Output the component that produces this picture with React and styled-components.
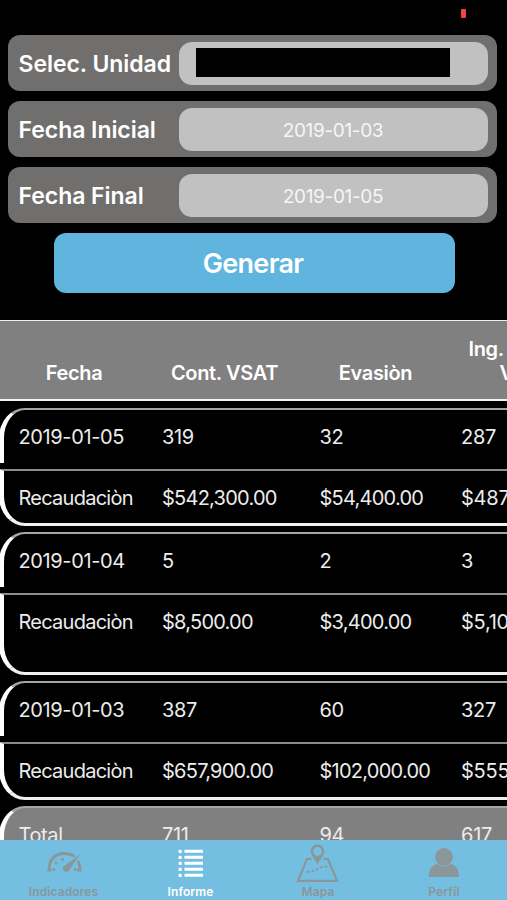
import styled, { createGlobalStyle } from 'styled-components';

const GlobalStyle = createGlobalStyle`
  * {
    box-sizing: border-box;
  }
  body {
    margin: 0;
    background-color: #000000;
    color: #ffffff;
    font-family: Inter, 'Liberation Sans', sans-serif;
    overflow: hidden;
  }
`;

const Screen = styled.div`
  display: flex;
  flex-direction: column;
  width: 507px;
  height: 900px;
  overflow: hidden;
  background-color: #000000;
`;

const StatusBar = styled.div`
  display: flex;
  justify-content: flex-end;
  flex: none;
  height: 35px;
  padding: 9px 41px 0 0;
`;

const Battery = styled.div`
  width: 5px;
  height: 9px;
  border-radius: 1px;
  background-color: #f4453a;
`;

const Form = styled.div`
  display: flex;
  flex-direction: column;
  flex: none;
  gap: 10px;
  height: 285px;
  padding: 0 10px 0 8px;
`;

const Field = styled.div`
  display: flex;
  align-items: center;
  justify-content: space-between;
  height: 56px;
  padding: 0 9px 0 10.5px;
  border-radius: 12px;
  background-color: #706f6e;
`;

const Label = styled.span`
  padding-top: 2px;
  font-size: 23px;
  font-weight: 600;
  letter-spacing: -0.05px;
  white-space: nowrap;
`;

const Input = styled.div`
  display: flex;
  align-items: center;
  justify-content: center;
  flex: none;
  width: 309px;
  height: 43px;
  padding: 2px 1px 0 0;
  border-radius: 13px;
  background-color: #c1c1c1;
  font-size: 19px;
  letter-spacing: -0.35px;
  color: #f6f6f6;
`;

const Redacted = styled.div`
  width: 254px;
  height: 29px;
  margin: 0 20px 3px 0;
  background-color: #000000;
`;

const Button = styled.button`
  align-self: center;
  width: 401px;
  height: 60px;
  margin-left: 3px;
  padding: 1px 2px 0 0;
  border: none;
  border-radius: 12px;
  background-color: #5fb5dd;
  color: #ffffff;
  font-family: inherit;
  font-size: 27px;
  font-weight: 600;
  letter-spacing: -0.7px;
`;

const Table = styled.div`
  flex: 1;
  min-height: 0;
  overflow: hidden;
`;

const Header = styled.div`
  display: grid;
  grid-template-columns: 148px 153px 149px 200px;
  align-items: end;
  height: 81px;
  margin-bottom: 7px;
  padding-bottom: 14px;
  border-top: 1px solid #ececec;
  border-bottom: 2px solid #f2f2f2;
  background-color: #808080;
`;

const HeaderCell = styled.div`
  padding-left: ${(props) => (props.$wrap ? '18.5px' : '0')};
  font-size: 20px;
  font-weight: 600;
  line-height: 24px;
  letter-spacing: -0.35px;
  text-align: ${(props) => (props.$wrap ? 'left' : 'center')};
  white-space: nowrap;
`;

const SecondLine = styled.div`
  padding-left: 31px;
`;

const Group = styled.div`
  display: flex;
  flex-direction: column;
  gap: 6px;
  width: 660px;
  margin: 0 0 6px -1px;
`;

const Row = styled.div`
  display: grid;
  grid-template-columns: 143.5px 157.5px 141.5px 200px;
  align-items: start;
  height: ${(props) => props.$height}px;
  padding: 15px 0 0 14.5px;
  border-left: 5px solid #ffffff;
  border-top: 2px solid ${(props) => (props.$last ? '#8c8c8c' : '#a6a6a6')};
  border-bottom: ${(props) => (props.$last ? '3px solid #f0f0f0' : 'none')};
  border-radius: ${(props) => (props.$last ? '0 0 0 26px / 0 0 0 30px' : '26px 0 0 0 / 30px 0 0 0')};
  background-color: ${(props) => (props.$total ? '#808080' : '#000000')};
`;

const Cell = styled.div`
  font-size: 20px;
  line-height: 24px;
  letter-spacing: ${(props) => (props.$money ? -0.75 : -0.37)}px;
  color: #ececec;
  white-space: nowrap;

  &:last-child {
    letter-spacing: -0.25px;
  }
`;

const TabBar = styled.div`
  display: grid;
  grid-template-columns: 127px 127px 128px 124px;
  flex: none;
  height: 60px;
  background-color: #74bfe1;
`;

const Tab = styled.div`
  display: flex;
  flex-direction: column;
  align-items: center;
  color: ${(props) => (props.$active ? '#ffffff' : '#8b9699')};
`;

const TabIcon = styled.svg`
  display: block;
  flex: none;
  width: 46px;
  height: 44px;
`;

const TabLabel = styled.span`
  font-size: 12px;
  font-weight: 600;
  line-height: 15px;
  letter-spacing: 0.1px;
`;

const groups = [
  {
    date: ['2019-01-05', '319', '32', '287'],
    money: ['Recaudaciòn', '$542,300.00', '$54,400.00', '$487,900.00'],
    height: 57,
  },
  {
    date: ['2019-01-04', '5', '2', '3'],
    money: ['Recaudaciòn', '$8,500.00', '$3,400.00', '$5,100.00'],
    height: 82,
  },
  {
    date: ['2019-01-03', '387', '60', '327'],
    money: ['Recaudaciòn', '$657,900.00', '$102,000.00', '$555,900.00'],
    height: 58,
  },
];

const total = ['Total', '711', '94', '617'];

const GaugeIcon = () => (
  <TabIcon viewBox="0 4.5 46 44">
    <path
      d="M8 35.500C7.500 24 14 18 23.500 18c4 0 7.500 1 10 3.200M37 25.500c1.700 3 2 6 2 10"
      fill="none"
      stroke="currentColor"
      strokeWidth="2.800"
    />
    <path d="M39.500 18.500L29 33.500c-1.200 2.500-3.500 3.500-6 2-2.300-2-1.500-4.500 1-5.500z" fill="currentColor" />
    <g fill="currentColor">
      <circle cx="13" cy="34" r="1.400" />
      <circle cx="15" cy="27.500" r="1.400" />
      <circle cx="21.500" cy="24" r="1.400" />
      <circle cx="34" cy="34" r="1.400" />
      <path d="M6.500 33h4v3h-4zM36 33h4.500v3H36z" />
    </g>
  </TabIcon>
);

const ListIcon = () => (
  <TabIcon viewBox="0.5 0 46 44">
    {[11.5, 17.5, 23.5, 29.5, 35.5].map((y) => (
      <g key={y} fill="currentColor">
        <rect x="11" y={y - 1.7} width="3.300" height="3.300" rx="1.200" />
        <rect x="17" y={y - 1.7} width="18.500" height="3" rx="0.500" />
      </g>
    ))}
  </TabIcon>
);

const MapIcon = () => (
  <TabIcon viewBox="0.5 0 46 44">
    <g fill="none" stroke="currentColor" strokeWidth="2.200">
      <path d="M17 19h-4.500L3.500 40.800h39L33.500 19H29" />
      <path d="M12.500 31.500c5 .8 8-1 12-3.200 3-1.600 6-2 10-1.800" strokeWidth="1.900" strokeDasharray="2.800 1.800" />
    </g>
    <path
      d="M23 4.500a6.800 6.800 0 0 0-6.800 6.800c0 4.500 4.300 7.200 6.800 13.700 2.500-6.500 6.800-9.200 6.800-13.700A6.800 6.800 0 0 0 23 4.500zm0 2.400a4.400 4.400 0 1 1 0 8.800 4.400 4.400 0 0 1 0-8.800z"
      fill="currentColor"
      fillRule="evenodd"
    />
  </TabIcon>
);

const PersonIcon = () => (
  <TabIcon viewBox="0 0 46 44">
    <g fill="currentColor">
      <circle cx="23" cy="17" r="8.900" />
      <path d="M7.800 37c0-7 3-12 8.700-13 4 3.300 9 3.300 13 0C35 25 38.200 30 38.200 37z" />
    </g>
  </TabIcon>
);

const tabs = [
  { name: 'Indicadores', Icon: GaugeIcon },
  { name: 'Informe', Icon: ListIcon, active: true },
  { name: 'Mapa', Icon: MapIcon },
  { name: 'Perfil', Icon: PersonIcon },
];

const App = () => (
  <>
    <GlobalStyle />
    <Screen>
      <StatusBar>
        <Battery />
      </StatusBar>
      <Form>
        <Field>
          <Label>Selec. Unidad</Label>
          <Input>
            <Redacted />
          </Input>
        </Field>
        <Field>
          <Label>Fecha Inicial</Label>
          <Input>2019-01-03</Input>
        </Field>
        <Field>
          <Label>Fecha Final</Label>
          <Input>2019-01-05</Input>
        </Field>
        <Button>Generar</Button>
      </Form>
      <Table>
        <Header>
          <HeaderCell>Fecha</HeaderCell>
          <HeaderCell>Cont. VSAT</HeaderCell>
          <HeaderCell>Evasiòn</HeaderCell>
          <HeaderCell $wrap>
            Ing.
            <SecondLine>VSAT</SecondLine>
          </HeaderCell>
        </Header>
        {groups.map(({ date, money, height }) => (
          <Group key={date[0]}>
            <Row $height={55}>
              {date.map((text) => (
                <Cell key={text}>{text}</Cell>
              ))}
            </Row>
            <Row $height={height} $last>
              {money.map((text) => (
                <Cell key={text} $money>
                  {text}
                </Cell>
              ))}
            </Row>
          </Group>
        ))}
        <Group>
          <Row $height={55} $total>
            {total.map((text) => (
              <Cell key={text}>{text}</Cell>
            ))}
          </Row>
        </Group>
      </Table>
      <TabBar>
        {tabs.map(({ name, Icon, active }) => (
          <Tab key={name} $active={active}>
            <Icon />
            <TabLabel>{name}</TabLabel>
          </Tab>
        ))}
      </TabBar>
    </Screen>
  </>
);

export default App;
